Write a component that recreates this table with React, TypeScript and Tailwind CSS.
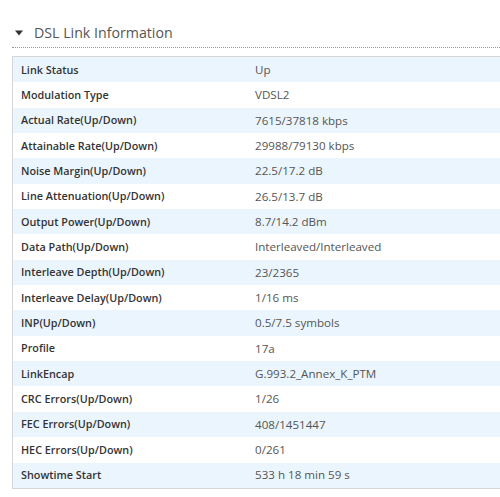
import React from "react";

const rows: [string, string][] = [
  ["Link Status", "Up"],
  ["Modulation Type", "VDSL2"],
  ["Actual Rate(Up/Down)", "7615/37818 kbps"],
  ["Attainable Rate(Up/Down)", "29988/79130 kbps"],
  ["Noise Margin(Up/Down)", "22.5/17.2 dB"],
  ["Line Attenuation(Up/Down)", "26.5/13.7 dB"],
  ["Output Power(Up/Down)", "8.7/14.2 dBm"],
  ["Data Path(Up/Down)", "Interleaved/Interleaved"],
  ["Interleave Depth(Up/Down)", "23/2365"],
  ["Interleave Delay(Up/Down)", "1/16 ms"],
  ["INP(Up/Down)", "0.5/7.5 symbols"],
  ["Profile", "17a"],
  ["LinkEncap", "G.993.2_Annex_K_PTM"],
  ["CRC Errors(Up/Down)", "1/26"],
  ["FEC Errors(Up/Down)", "408/1451447"],
  ["HEC Errors(Up/Down)", "0/261"],
  ["Showtime Start", "533 h 18 min 59 s"],
];

export default function App() {
  return (
    <div
      className="w-[500px] h-[497px] bg-white overflow-hidden"
      style={{ fontFamily: '"Open Sans", "Noto Sans", sans-serif' }}
    >
      <div className="pl-[12px] pt-[23px]">
        <div className="flex items-center h-[20px]">
          <svg width="10" height="8" viewBox="0 0 10 8" className="ml-[2px] mr-[10px]">
            <polygon points="1,1.5 9,1.5 5,6.5" fill="#333" />
          </svg>
          <span className="text-[14.2px] text-[#555] leading-[20px]">DSL Link Information</span>
        </div>
        <div className="mt-[4px] border-t border-dotted border-[#999]" />
        <div className="mt-[8px] border-l border-t border-b border-[#d6d6d6]">
          {rows.map(([k, v], i) => (
            <div
              key={k}
              className={`flex items-center h-[25.35px] ${i % 2 === 0 ? "bg-[#ebf5fe]" : "bg-white"}`}
            >
              <div className="w-[242px] pl-[8px] text-[10.8px] font-semibold text-[#333]">{k}</div>
              <div className="text-[11.6px] text-[#555]">{v}</div>
            </div>
          ))}
        </div>
      </div>
    </div>
  );
}
